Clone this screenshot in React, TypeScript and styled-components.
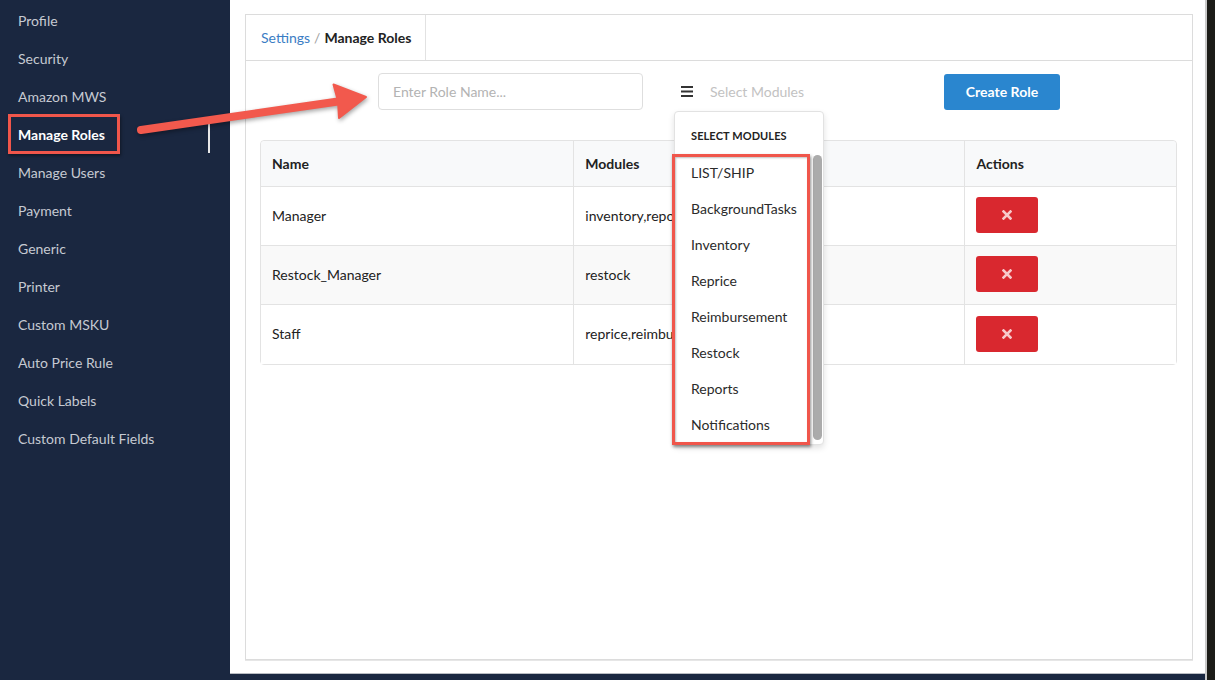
import React from "react";
import styled, { createGlobalStyle } from "styled-components";

const GlobalStyle = createGlobalStyle`
  html, body { margin: 0; padding: 0; }
  body { font-family: Lato, "Open Sans", Arial, sans-serif; background: #1a2740; }
  * { box-sizing: border-box; }
`;

const Page = styled.div`
  position: relative;
  display: flex;
  width: 1215px;
  height: 680px;
  background: #1a2740;
  overflow: hidden;
`;

const Sidebar = styled.nav`
  width: 230px;
  flex: none;
  display: flex;
  flex-direction: column;
  padding-top: 1px;
  position: relative;
`;

const NavItem = styled.div<{ $active?: boolean }>`
  height: 38px;
  display: flex;
  align-items: center;
  padding-left: 18px;
  font-size: 14px;
  color: ${(p) => (p.$active ? "#ffffff" : "#c6cad2")};
  font-weight: ${(p) => (p.$active ? 700 : 400)};
  position: relative;
`;

const ActiveBar = styled.span`
  position: absolute;
  left: 208px;
  top: 2px;
  width: 2px;
  height: 36px;
  background: #e8e8e8;
`;

const MainColumn = styled.div`
  width: 975px;
  flex: none;
  display: flex;
  flex-direction: column;
`;

const Main = styled.main`
  height: 674px;
  background: #ffffff;
  padding: 14px 12px 13px 15px;
  border-bottom: 1px solid #b9bcc2;
`;

const RightStrip = styled.div`
  flex: 1;
  background: #1c1c18;
  border-left: 2px solid #c9c9c9;
`;

const Card = styled.section`
  height: 100%;
  border: 1px solid #dcdcdc;
  display: flex;
  flex-direction: column;
  box-shadow: 0 1px 0 #e6e6e6;
`;

const CardHeader = styled.header`
  height: 46px;
  display: flex;
  border-bottom: 1px solid #dcdcdc;
`;

const Crumbs = styled.div`
  width: 180px;
  display: flex;
  align-items: center;
  padding-left: 15px;
  border-right: 1px solid #e2e2e2;
  font-size: 14px;
`;

const CrumbLink = styled.span`
  color: #3b7dc4;
`;

const CrumbSep = styled.span`
  color: #a0a0a0;
  margin: 0 4px 0 4px;
`;

const CrumbCurrent = styled.span`
  color: #222;
  font-weight: 700;
`;

const CardBody = styled.div`
  flex: 1;
  padding: 12px 15px 0 14px;
  display: flex;
  flex-direction: column;
`;

const Toolbar = styled.div`
  display: flex;
  align-items: center;
  height: 37px;
  padding-left: 118px;
`;

const RoleInput = styled.input`
  width: 265px;
  height: 37px;
  border: 1px solid #dedede;
  border-radius: 4px;
  padding: 0 14px;
  font-family: Lato, Arial, sans-serif;
  font-size: 14px;
  color: #333;
  outline: none;
  &::placeholder { color: #b3b3b3; }
`;

const SelectArea = styled.div`
  position: relative;
  width: 301px;
  height: 37px;
  display: flex;
  align-items: center;
  padding-left: 38px;
  gap: 17px;
`;

const SelectPlaceholder = styled.span`
  font-size: 14px;
  color: #c2c2c2;
`;

const Dropdown = styled.div`
  position: absolute;
  top: 38px;
  left: 31px;
  width: 150px;
  height: 334px;
  background: #fff;
  border: 1px solid #e2e2e2;
  border-radius: 4px;
  box-shadow: 0 3px 6px rgba(0, 0, 0, 0.12);
  z-index: 5;
  display: flex;
  flex-direction: column;
`;

const DropdownTitle = styled.div`
  height: 42px;
  display: flex;
  align-items: center;
  padding: 4px 0 0 16px;
  font-size: 11px;
  font-weight: 700;
  color: #222;
  letter-spacing: 0.1px;
`;

const DropdownList = styled.div`
  position: relative;
  display: flex;
  flex-direction: column;
`;

const DropdownItem = styled.div`
  height: 36px;
  display: flex;
  align-items: center;
  padding-left: 16px;
  font-size: 14px;
  color: #2b2b2b;
`;

const ScrollThumb = styled.div`
  position: absolute;
  right: 1px;
  top: 1px;
  width: 9px;
  height: 285px;
  background: #ababab;
  border-radius: 5px;
`;

const Highlight = styled.div`
  position: absolute;
  left: -3px;
  top: 0;
  width: 138px;
  height: 291px;
  border: 3px solid #f0564b;
  box-shadow: 1px 2px 3px rgba(0, 0, 0, 0.45), inset 1px 1px 2px rgba(0, 0, 0, 0.25);
  pointer-events: none;
`;

const PrimaryButton = styled.button`
  width: 116px;
  height: 36px;
  border: none;
  border-radius: 3px;
  background: #2a86cf;
  color: #fff;
  font-family: Lato, Arial, sans-serif;
  font-size: 14px;
  font-weight: 700;
`;

const Table = styled.table`
  margin-top: 30px;
  width: 917px;
  border-collapse: separate;
  border-spacing: 0;
  border: 1px solid #e3e3e3;
  border-radius: 4px;
  font-size: 14px;
  color: #222;
`;

const Th = styled.th<{ $w: number }>`
  width: ${(p) => p.$w}px;
  height: 46px;
  text-align: left;
  padding: 0 11px 1px;
  background: #f8f9fa;
  font-weight: 700;
  border-bottom: 1px solid #e3e3e3;
  & + & { border-left: 1px solid #e3e3e3; }
  &:first-child { border-top-left-radius: 4px; }
  &:last-child { border-top-right-radius: 4px; }
`;

const Tr = styled.tr<{ $striped?: boolean }>`
  background: ${(p) => (p.$striped ? "#f9f9f9" : "#fff")};
  &:not(:last-child) td { border-bottom: 1px solid #e3e3e3; }
`;

const Td = styled.td`
  height: 59px;
  padding: 0 11px 2px;
  white-space: nowrap;
  overflow: hidden;
  & + & { border-left: 1px solid #e3e3e3; }
`;

const DeleteButton = styled.button`
  width: 62px;
  height: 36px;
  border: none;
  border-radius: 3px;
  background: #d9282f;
  display: flex;
  align-items: center;
  justify-content: center;
`;

const SidebarMark = styled.div`
  position: absolute;
  left: 8px;
  top: 114px;
  width: 112px;
  height: 40px;
  border: 3px solid #f0564b;
  box-shadow: 1px 2px 3px rgba(0, 0, 0, 0.4);
  pointer-events: none;
`;

const ArrowLayer = styled.svg`
  position: absolute;
  left: 0;
  top: 0;
  pointer-events: none;
  z-index: 10;
  filter: drop-shadow(1px 2px 2px rgba(0, 0, 0, 0.35));
`;

const navItems = [
  "Profile",
  "Security",
  "Amazon MWS",
  "Manage Roles",
  "Manage Users",
  "Payment",
  "Generic",
  "Printer",
  "Custom MSKU",
  "Auto Price Rule",
  "Quick Labels",
  "Custom Default Fields",
];

const modules = [
  "LIST/SHIP",
  "BackgroundTasks",
  "Inventory",
  "Reprice",
  "Reimbursement",
  "Restock",
  "Reports",
  "Notifications",
];

const roles = [
  { name: "Manager", modules: "inventory,reports" },
  { name: "Restock_Manager", modules: "restock" },
  { name: "Staff", modules: "reprice,reimbursement" },
];

const Hamburger = () => (
  <svg width="12" height="11" viewBox="0 0 12 11">
    <rect x="0" y="0" width="12" height="2" fill="#333" />
    <rect x="0" y="4.5" width="12" height="2" fill="#333" />
    <rect x="0" y="9" width="12" height="2" fill="#333" />
  </svg>
);

const TimesIcon = () => (
  <svg width="10" height="10" viewBox="0 0 10 10">
    <path d="M1.5 1.5 L8.5 8.5 M8.5 1.5 L1.5 8.5" stroke="#f7c9cb" strokeWidth="2.6" strokeLinecap="square" />
  </svg>
);

export default function App() {
  return (
    <>
      <GlobalStyle />
      <Page>
        <Sidebar>
          {navItems.map((item) => (
            <NavItem key={item} $active={item === "Manage Roles"}>
              {item}
              {item === "Manage Roles" && <ActiveBar />}
            </NavItem>
          ))}
          <SidebarMark />
        </Sidebar>
        <MainColumn>
          <Main>
            <Card>
              <CardHeader>
                <Crumbs>
                  <CrumbLink>Settings</CrumbLink>
                  <CrumbSep>/</CrumbSep>
                  <CrumbCurrent>Manage Roles</CrumbCurrent>
                </Crumbs>
              </CardHeader>
              <CardBody>
                <Toolbar>
                  <RoleInput placeholder="Enter Role Name..." />
                  <SelectArea>
                    <Hamburger />
                    <SelectPlaceholder>Select Modules</SelectPlaceholder>
                    <Dropdown>
                      <DropdownTitle>SELECT MODULES</DropdownTitle>
                      <DropdownList>
                        {modules.map((m) => (
                          <DropdownItem key={m}>{m}</DropdownItem>
                        ))}
                        <ScrollThumb />
                        <Highlight />
                      </DropdownList>
                    </Dropdown>
                  </SelectArea>
                  <PrimaryButton>Create Role</PrimaryButton>
                </Toolbar>
                <Table>
                  <thead>
                    <tr>
                      <Th $w={313}>Name</Th>
                      <Th $w={392}>Modules</Th>
                      <Th $w={212}>Actions</Th>
                    </tr>
                  </thead>
                  <tbody>
                    {roles.map((r, i) => (
                      <Tr key={r.name} $striped={i % 2 === 1}>
                        <Td>{r.name}</Td>
                        <Td>{r.modules}</Td>
                        <Td>
                          <DeleteButton>
                            <TimesIcon />
                          </DeleteButton>
                        </Td>
                      </Tr>
                    ))}
                  </tbody>
                </Table>
              </CardBody>
            </Card>
          </Main>
        </MainColumn>
        <RightStrip />
        <ArrowLayer width="1215" height="680" viewBox="0 0 1215 680">
          <line x1="141" y1="130" x2="338" y2="101.5" stroke="#f2594d" strokeWidth="8" strokeLinecap="round" />
          <polygon points="366,97 333.5,84.5 338,101 339,118" fill="#f2594d" strokeLinejoin="round" stroke="#f2594d" strokeWidth="2" />
        </ArrowLayer>
      </Page>
    </>
  );
}
